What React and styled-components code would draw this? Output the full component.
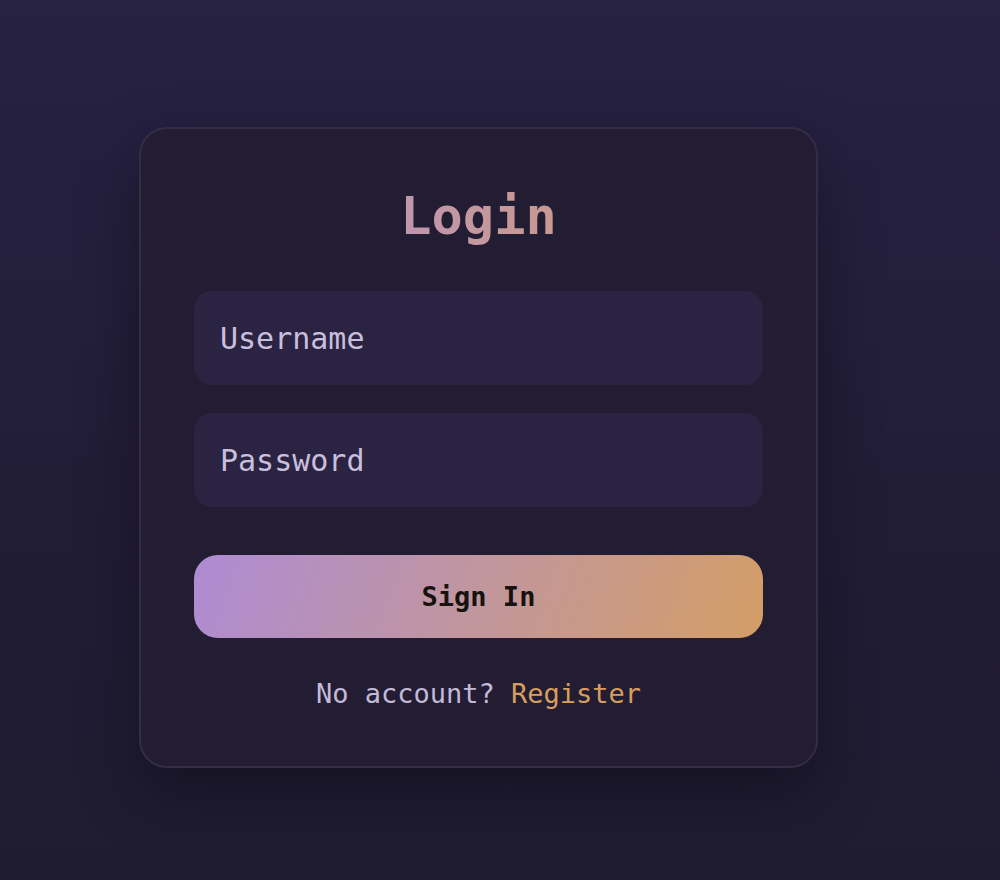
import styled, { createGlobalStyle } from "styled-components";

const GlobalStyle = createGlobalStyle`
  html, body {
    margin: 0;
    padding: 0;
  }
  body {
    background: linear-gradient(180deg, #272142 0%, #221d37 55%, #1f1b30 100%);
    font-family: "DejaVu Sans Mono", "Liberation Mono", monospace;
    min-height: 880px;
  }
`

const Page = styled.main`
  min-height: 880px;
  display: flex;
  align-items: flex-start;
  padding: 127px 0 0 139px;
  box-sizing: border-box;
`

const Card = styled.form`
  width: 679px;
  box-sizing: border-box;
  padding: 57px 53px 54px;
  background: #221d33;
  border: 2px solid #332d48;
  border-radius: 28px;
  box-shadow: 0 24px 60px rgba(10, 8, 20, 0.45);
  display: flex;
  flex-direction: column;
`

const Title = styled.h1`
  margin: 0 0 45px;
  font-size: 52px;
  line-height: 60px;
  font-weight: 700;
  text-align: center;
  background: linear-gradient(90deg, #bf95b3 30%, #c99a8a 70%);
  -webkit-background-clip: text;
  background-clip: text;
  color: transparent;
`

const Field = styled.input`
  height: 94px;
  box-sizing: border-box;
  border: none;
  outline: none;
  border-radius: 18px;
  background: #2a2442;
  padding: 0 26px;
  margin-bottom: ${p => p.$last ? "48px" : "28px"};
  font-family: inherit;
  font-size: 30px;
  color: #c9bfdd;

  &::placeholder {
    color: #c9bfdd;
  }
`

const SignIn = styled.button`
  height: 83px;
  border: none;
  border-radius: 24px;
  background: linear-gradient(110deg, #ae8bd4 0%, #c1969d 50%, #d49e66 100%);
  font-family: inherit;
  font-size: 27px;
  font-weight: 700;
  color: #17120f;
  cursor: pointer;
`

const Footer = styled.p`
  margin: 38px 0 0;
  text-align: center;
  font-size: 27px;
  line-height: 36px;
  color: #c3bad8;

  a {
    color: #d99d5f;
    text-decoration: none;
  }
`

function App() {
  return (
    <>
      <GlobalStyle />
      <Page>
        <Card onSubmit={e => e.preventDefault()}>
          <Title>Login</Title>
          <Field name="username" placeholder="Username" />
          <Field name="password" type="password" placeholder="Password" $last />
          <SignIn type="submit">Sign In</SignIn>
          <Footer>
            No account? <a href="#register">Register</a>
          </Footer>
        </Card>
      </Page>
    </>
  )
}

export default App
